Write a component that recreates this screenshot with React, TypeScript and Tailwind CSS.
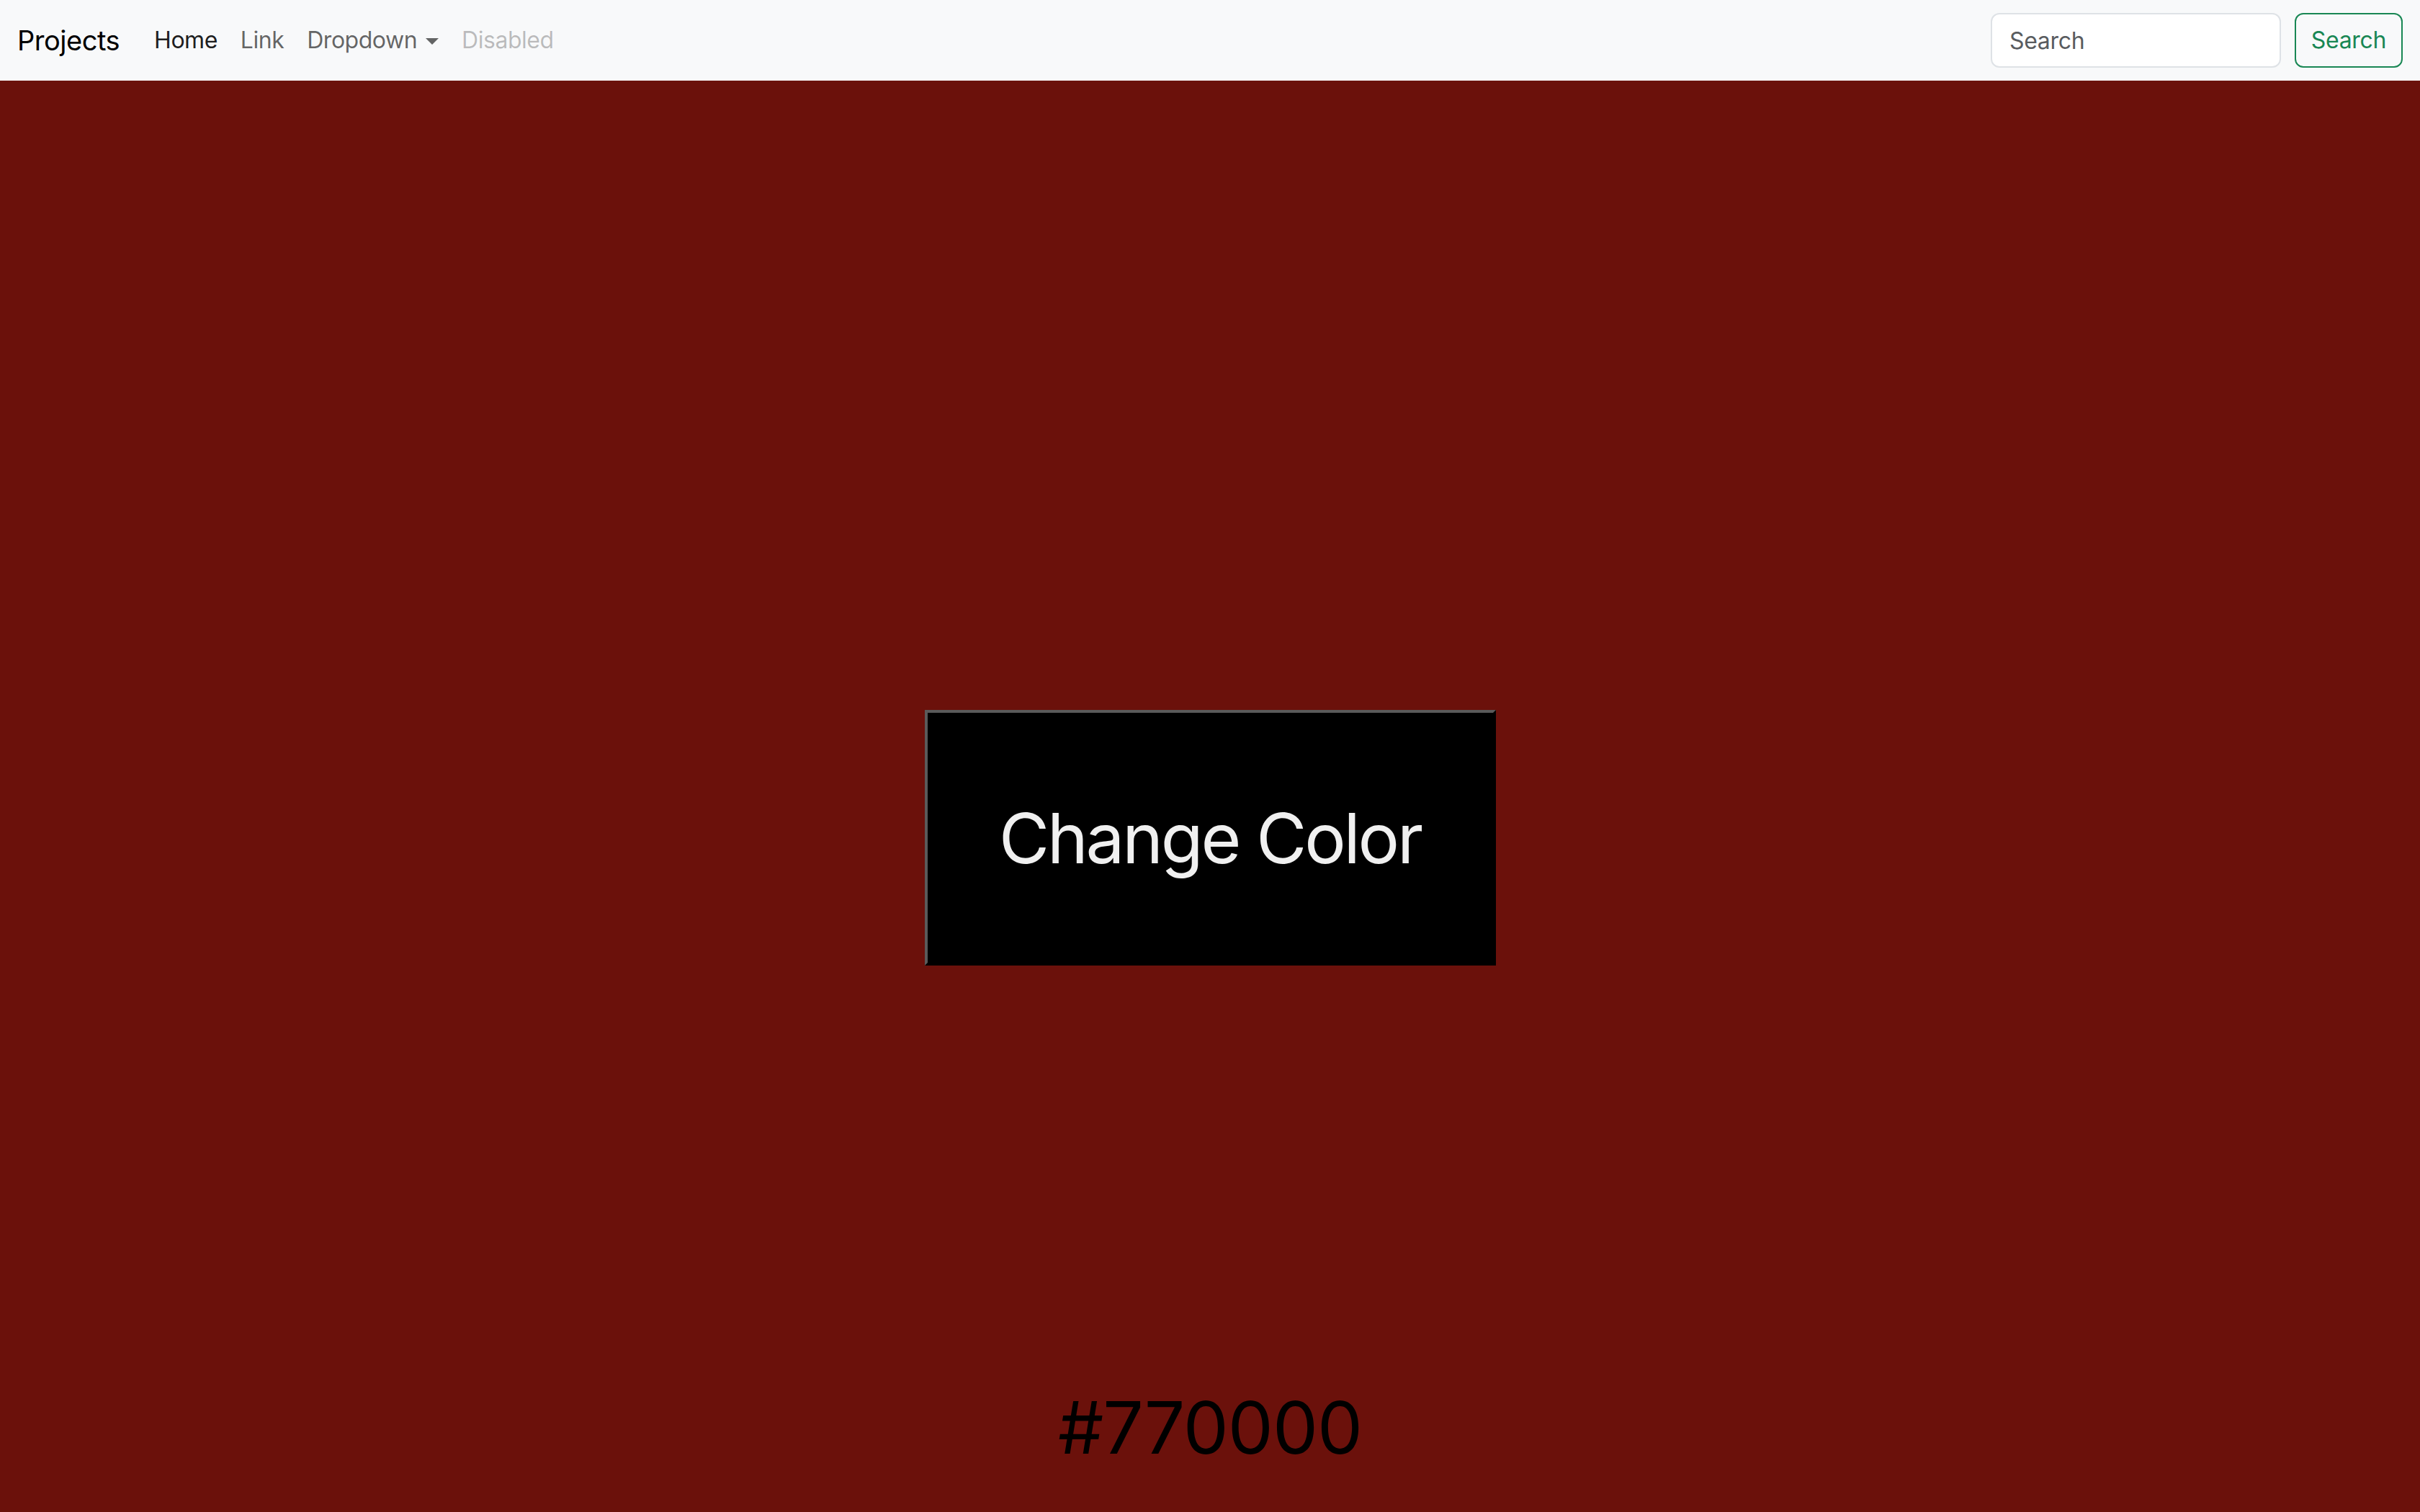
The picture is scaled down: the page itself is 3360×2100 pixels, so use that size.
import { useState } from "react";

const colors = ["#770000", "#005577", "#227700", "#553377"];

export default function App() {
  const [idx, setIdx] = useState(0);

  return (
    <div className="min-h-screen flex flex-col bg-[#6b110b] font-['Inter','Noto_Sans',sans-serif]">
      <nav className="h-[112px] bg-[#f8f9fa] flex items-center justify-between px-[24px]">
        <div className="flex items-center tracking-[-0.03em]">
          <span className="text-[38px] text-black mr-[32px] leading-none">Projects</span>
          <ul className="flex items-center text-[32px] leading-none">
            <li className="px-[16px] text-black/90">Home</li>
            <li className="px-[16px] text-black/60">Link</li>
            <li className="px-[16px] text-black/60 flex items-center">
              Dropdown
              <span className="ml-[12px] mt-[2px] w-0 h-0 border-l-[9px] border-r-[9px] border-t-[9px] border-l-transparent border-r-transparent border-t-black/60"></span>
            </li>
            <li className="px-[16px] text-black/25">Disabled</li>
          </ul>
        </div>
        <form className="flex items-center tracking-[-0.02em]" onSubmit={(e) => e.preventDefault()}>
          <input
            className="w-[403px] h-[76px] mr-[19px] px-[24px] text-[32px] bg-white border-2 border-[#dee2e6] rounded-[12px] placeholder:text-[#595c5f] outline-none"
            placeholder="Search"
          />
          <button className="w-[150px] h-[76px] text-[32px] text-[#198754] border-2 border-[#198754] rounded-[12px]">
            Search
          </button>
        </form>
      </nav>
      <main className="flex-1 flex flex-col items-center pt-[874px]">
        <button
          onClick={() => setIdx((i) => (i + 1) % colors.length)}
          className="w-[793px] h-[355px] bg-black text-[#f0f0f0] text-[96px] tracking-[-0.033em] border-[4px] border-t-[#5a5a5a] border-l-[#5a5a5a] border-b-black border-r-black"
        >
          Change Color
        </button>
        <p className="mt-[582px] text-[100px] leading-[1.2] tracking-[-0.01em] text-black">{colors[idx]}</p>
      </main>
    </div>
  );
}
